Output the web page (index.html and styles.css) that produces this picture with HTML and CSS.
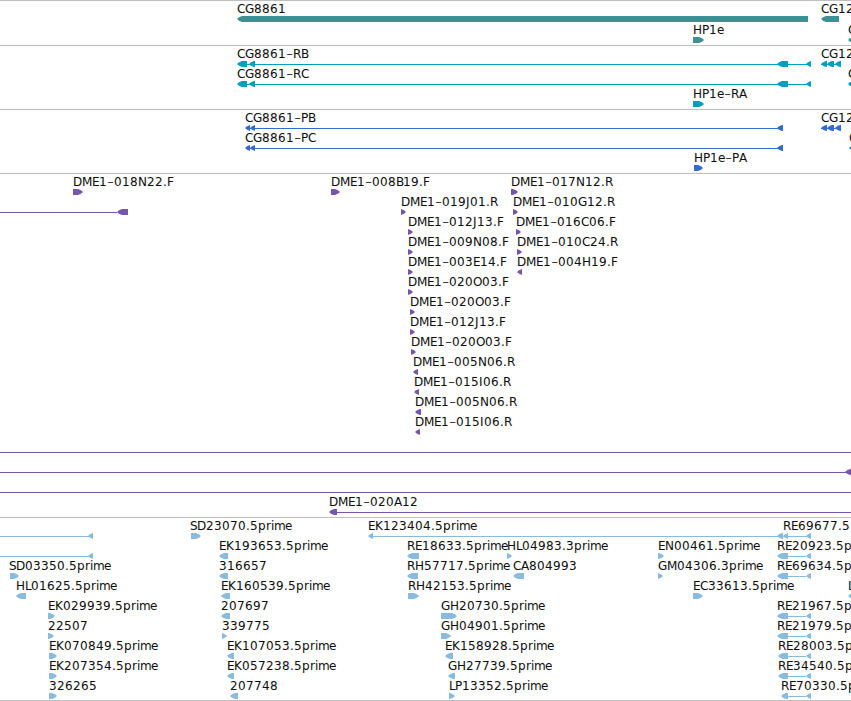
FILE: index.html
```html
<!DOCTYPE html>
<html lang="en">
<head>
<meta charset="utf-8">
<title>Genome tracks</title>
<link rel="stylesheet" href="styles.css">
</head>
<body>
<main class="tracks" id="tracks"></main>
<script src="tracks.js"></script>
</body>
</html>
```

FILE: styles.css
```css
body {
  margin: 0;
  background: #fff;
  overflow: hidden;
}

.tracks {
  display: flex;
  flex-direction: column;
  width: 851px;
  border-bottom: 1px solid #bebebe;
}

.track {
  box-sizing: border-box;
  border-top: 1px solid #bebebe;
  overflow: hidden;
}

.track svg {
  display: block;
}

.track text {
  font-family: "DejaVu Sans", sans-serif;
  font-size: 12px;
  fill: #0c0c0c;
}

.track .dash {
  font-family: "DejaVu Sans Light", "DejaVu Sans", sans-serif;
  font-weight: 200;
  font-size: 20px;
}

.gene { color: #3f8f94; }
.transcript { color: #009fc0; }
.protein { color: #326ccc; }
.clone { color: #7755a8; }
.est { color: #88bbdd; }

.shape { fill: currentColor; }
```

FILE: tracks.js
```js
// Each feature: [row, labelX, label, arrows, lines]
// arrow: [start, end, direction]; line: [start, end]
const L = 'L', R = 'R';

const tail = (x) => [[[x, 788, L], [806, 811, L]], [[788, 806]]];
const threeExons = [[821, 827, L], [827, 834, L], [835, 841, L]];
const transcript = [[237, 247, L], [249, 255, L], [777, 788, L], [806, 811, L]];
const protein = [[245, 250, L], [250, 255, L], [777, 783, L]];

const tracks = [
  { name: 'gene', height: 45, pitch: 21, features: [
    [0, 237, 'CG8861', [[237, 808, L]]],
    [0, 821, 'CG12', [[821, 839, L]]],
    [1, 693, 'HP1e', [[693, 704, R]]],
    [1, 848, 'C', [[848, 858, L]]]
  ]},
  { name: 'transcript', height: 64, pitch: 20, features: [
    [0, 237, 'CG8861-RB', transcript, [[247, 811]]],
    [0, 821, 'CG12', threeExons, [[821, 841]]],
    [1, 237, 'CG8861-RC', transcript, [[247, 811]]],
    [1, 848, 'C', [[848, 858, L]]],
    [2, 693, 'HP1e-RA', [[693, 704, R]]]
  ]},
  { name: 'protein', height: 64, pitch: 20, features: [
    [0, 245, 'CG8861-PB', protein, [[250, 783]]],
    [0, 821, 'CG12', threeExons, [[821, 841]]],
    [1, 245, 'CG8861-PC', protein, [[250, 783]]],
    [1, 849, 'C', [[849, 858, L]]],
    [2, 694, 'HP1e-PA', [[694, 703, R]]]
  ]},
  { name: 'clone', height: 344, pitch: 20, features: [
    [0, 73, 'DME1-018N22.F', [[73, 83, R]]],
    [0, 331, 'DME1-008B19.F', [[331, 340, R]]],
    [0, 511, 'DME1-017N12.R', [[511, 518, R]]],
    [1, 0, '', [[117, 128, L]], [[0, 117]]],
    [1, 401, 'DME1-019J01.R', [[401, 406, R]]],
    [1, 513, 'DME1-010G12.R', [[513, 518, R]]],
    [2, 408, 'DME1-012J13.F', [[408, 413, R]]],
    [2, 516, 'DME1-016C06.F', [[516, 521, R]]],
    [3, 408, 'DME1-009N08.F', [[408, 413, R]]],
    [3, 517, 'DME1-010C24.R', [[517, 522, R]]],
    [4, 408, 'DME1-003E14.F', [[408, 413, R]]],
    [4, 517, 'DME1-004H19.F', [[517, 522, L]]],
    [5, 408, 'DME1-020O03.F', [[408, 413, R]]],
    [6, 410, 'DME1-020O03.F', [[410, 415, R]]],
    [7, 410, 'DME1-012J13.F', [[410, 415, R]]],
    [8, 411, 'DME1-020O03.F', [[411, 416, R]]],
    [9, 413, 'DME1-005N06.R', [[413, 418, L]]],
    [10, 414, 'DME1-015I06.R', [[414, 419, L]]],
    [11, 415, 'DME1-005N06.R', [[415, 421, L]]],
    [12, 415, 'DME1-015I06.R', [[415, 420, L]]],
    [13, 0, '', [], [[0, 851]]],
    [14, 0, '', [[845, 856, L]], [[0, 851]]],
    [15, 0, '', [], [[0, 851]]],
    [16, 329, 'DME1-020A12', [[329, 337, L]], [[337, 851]]]
  ]},
  { name: 'est', height: 183, pitch: 20, features: [
    [0, 0, '', [[88, 93, L]], [[0, 90]]],
    [0, 190, 'SD23070.5prime', [[191, 201, R]]],
    [0, 368, 'EK123404.5prime', [[368, 373, L]], [[373, 778]]],
    [0, 783, 'RE69677.5', [[777, 783, L], [783, 788, L], [806, 811, L]], [[778, 811]]],
    [1, 0, '', [[88, 93, L]], [[0, 90]]],
    [1, 219, 'EK193653.5prime', [[219, 228, L]]],
    [1, 407, 'RE18633.5prime', [[407, 419, L]]],
    [1, 507, 'HL04983.3prime', [[507, 512, R]]],
    [1, 658, 'EN00461.5prime', [[658, 664, R]]],
    [1, 777, 'RE20923.5prime', ...tail(777)],
    [2, 9, 'SD03350.5prime', [[10, 19, R]]],
    [2, 219, '316657', [[219, 228, L]]],
    [2, 407, 'RH57717.5prime', [[407, 418, L]]],
    [2, 513, 'CA804993', [[513, 524, L]]],
    [2, 658, 'GM04306.3prime', [[658, 663, R]]],
    [2, 777, 'RE69634.5prime', ...tail(777)],
    [3, 16, 'HL01625.5prime', [[16, 26, L]]],
    [3, 221, 'EK160539.5prime', [[221, 230, L]]],
    [3, 408, 'RH42153.5prime', [[408, 419, R]]],
    [3, 693, 'EC33613.5prime', [[693, 703, R]]],
    [3, 848, 'L', [[848, 858, L]]],
    [4, 48, 'EK029939.5prime', [[48, 55, R]]],
    [4, 221, '207697', [[221, 230, L]]],
    [4, 441, 'GH20730.5prime', [[441, 457, R]]],
    [4, 777, 'RE21967.5prime', ...tail(777)],
    [5, 48, '22507', [[48, 54, R]]],
    [5, 222, '339775', [[222, 227, R]]],
    [5, 441, 'GH04901.5prime', [[441, 451, R]]],
    [5, 777, 'RE21979.5prime', ...tail(777)],
    [6, 49, 'EK070849.5prime', [[49, 57, R]]],
    [6, 227, 'EK107053.5prime', [[227, 234, L]]],
    [6, 445, 'EK158928.5prime', [[445, 453, L]]],
    [6, 778, 'RE28003.5prime', ...tail(778)],
    [7, 49, 'EK207354.5prime', [[49, 57, R]]],
    [7, 227, 'EK057238.5prime', [[227, 234, L]]],
    [7, 448, 'GH27739.5prime', [[448, 455, L]]],
    [7, 778, 'RE34540.5prime', ...tail(778)],
    [8, 49, '326265', [[49, 57, R]]],
    [8, 230, '207748', [[230, 238, L]]],
    [8, 449, 'LP13352.5prime', [[449, 455, R]]],
    [8, 781, 'RE70330.5prime', ...tail(781)]
  ]}
];

// Whole-pixel character advances; digits are 8px wide.
const advance = {
  A: 8, B: 7, C: 8, D: 9, E: 7, F: 7, G: 9, H: 9, I: 4, J: 4, K: 8, L: 6, M: 10,
  N: 9, O: 9, P: 7, R: 8, S: 7, '-': 7, '.': 4, p: 8, r: 5, i: 3, m: 11, e: 7
};

// The hyphen is wide and thin: a larger size, lowered to the digits' middle.
function label(x, baseline, text) {
  if (!text) return '';
  const runs = text.split(/(-)/).map((run) => {
    const xs = [];
    for (const ch of run) {
      xs.push(x);
      x += advance[ch] || 8;
    }
    return run === '-'
      ? `<tspan class="dash" x="${xs[0]}" y="${baseline + 2}">-</tspan>`
      : `<tspan x="${xs.join(' ')}" y="${baseline}">${run}</tspan>`;
  });
  return `<text>${runs.join('')}</text>`;
}

function arrow([a, b, dir], y) {
  const head = Math.min(5, b - a);
  const tip = dir === L ? a : b;
  const base = dir === L ? b : a;
  const s = dir === L ? 1 : -1;
  const points = [
    [tip, y + 3], [tip + 2 * s, y + 1.3], [tip + head * s, y], [base, y],
    [base, y + 6], [tip + head * s, y + 6], [tip + 2 * s, y + 4.7]
  ];
  return `<polygon class="shape" points="${points.join(' ')}"/>`;
}

function line([a, b], y) {
  return `<rect class="shape" x="${a}" y="${y + 3}" width="${b - a}" height="1"/>`;
}

document.getElementById('tracks').innerHTML = tracks.map((t) => {
  const body = t.features.map(([row, x, text, arrows, lines = []]) => {
    const top = 15 + row * t.pitch;
    return lines.map((l) => line(l, top)).join('') +
      arrows.map((a) => arrow(a, top)).join('') +
      label(x, top - 3, text);
  }).join('');
  const h = t.height - 1;
  return `<section class="track ${t.name}"><svg width="851" height="${h}" viewBox="0 0 851 ${h}">${body}</svg></section>`;
}).join('');
```
